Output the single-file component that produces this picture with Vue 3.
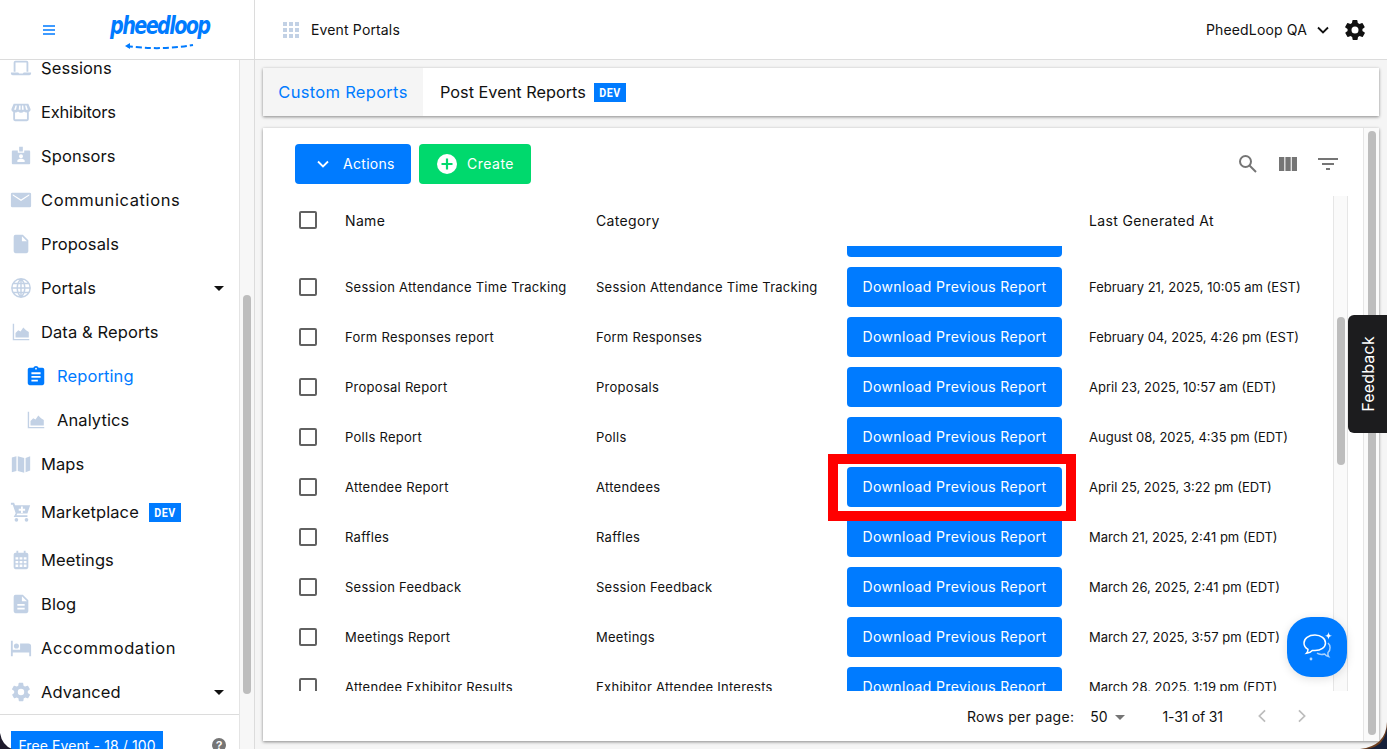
<script setup>
const navTop = [
  { label: 'Sessions', icon: 'laptop' },
  { label: 'Exhibitors', icon: 'store', tight: true },
  { label: 'Sponsors', icon: 'badge' },
  { label: 'Communications', icon: 'mail', wide: true },
  { label: 'Proposals', icon: 'file' },
  { label: 'Portals', icon: 'globe', caret: true },
  { label: 'Data & Reports', icon: 'chart' },
  { label: 'Reporting', icon: 'clip', sub: true, active: true },
  { label: 'Analytics', icon: 'chart', sub: true },
  { label: 'Maps', icon: 'map' },
  { label: 'Marketplace', icon: 'cart', dev: true, tall: true },
  { label: 'Meetings', icon: 'cal' },
  { label: 'Blog', icon: 'doc' },
  { label: 'Accommodation', icon: 'bed', wide: true },
  { label: 'Advanced', icon: 'gear', caret: true }
]
const icons = {
  laptop: 'M4 6a2 2 0 0 1 2-2h12a2 2 0 0 1 2 2v10h-2V6H6v10H4zM1 17h8l1 1h4l1-1h8v1a2 2 0 0 1-2 2H3a2 2 0 0 1-2-2z',
  store: 'M4 3h16l2.500 6a3 3 0 0 1-2 3v8a2 2 0 0 1-2 2H5.500a2 2 0 0 1-2-2v-8a3 3 0 0 1-2-3zM5.500 12.500V20h13v-7.500a4 4 0 0 1-3.250-1 4.500 4.500 0 0 1-6.500 0 4 4 0 0 1-3.250 1zM6 5l-1.500 4.500h2L7.500 5zM10 5l-.5 4.500h2V5zM13 5v4.500h2L14.500 5zM16.500 5l1 4.500h2L18 5z',
  badge: 'M10 2h4v5h-4zM3 6h5.500v2.500h7V6H21a1 1 0 0 1 1 1v13a1 1 0 0 1-1 1H3a1 1 0 0 1-1-1V7a1 1 0 0 1 1-1zm9 4a2.200 2.200 0 1 0 0 4.400 2.200 2.200 0 0 0 0-4.400zm-4 8.500h8V17c0-1.300-2.700-2-4-2s-4 .7-4 2z',
  mail: 'M2.500 4h19A1.500 1.500 0 0 1 23 5.500v13a1.500 1.500 0 0 1-1.500 1.500h-19A1.500 1.500 0 0 1 1 18.500v-13A1.500 1.500 0 0 1 2.500 4zM3 7l9 6 9-6V5.800l-9 5.700-9-5.700z',
  file: 'M6 2h8l6 6v12a2 2 0 0 1-2 2H6a2 2 0 0 1-2-2V4a2 2 0 0 1 2-2zm7 1.500V9h5.500z',
  globe: 'M12 2a10 10 0 1 0 0 20 10 10 0 0 0 0-20zM12 2c-5.500 5.500-5.500 14.500 0 20M12 2c5.500 5.500 5.500 14.500 0 20M12 2v20M2 12h20M3.500 7h17M3.500 17h17',
  chart: 'M3 3h1.500v16.500H21V21H3zM6 18v-5l3-3 2.500 1.500L14.500 7l3 3 3 2v6z',
  map: 'M2 5l5-1.500v16L2 21zM8.500 3.500l7 2v16l-7-2zM17 5.500l5-2V19l-5 2z',
  cart: 'M1 2h3.500l1 2.500H22l-3 9H8l-1 2h12v2H4l2.200-4.200L3 4H1zM12 6v2.500H9.500v2H12V13h2v-2.500h2.500v-2H14V6zM7 18.500a2 2 0 1 0 0 4 2 2 0 0 0 0-4zm11 0a2 2 0 1 0 0 4 2 2 0 0 0 0-4z',
  cal: 'M7 2h2v2h6V2h2v2h1a2 2 0 0 1 2 2v14a2 2 0 0 1-2 2H6a2 2 0 0 1-2-2V6a2 2 0 0 1 2-2h1zM6 9v2.500h3V9zm4.500 0v2.500h3V9zM15 9v2.500h3V9zM6 13v2.500h3V13zm4.500 0v2.500h3V13zM15 13v2.500h3V13zM6 17v2.500h3V17zm4.500 0v2.500h3V17zM15 17v2.500h3V17z',
  doc: 'M6 2h8l6 6v12a2 2 0 0 1-2 2H6a2 2 0 0 1-2-2V4a2 2 0 0 1 2-2zm7 1.500V9h5.500zM8 12v2h8v-2zm0 4v2h8v-2z',
  bed: 'M1 4h2v10h8V7h9a3 3 0 0 1 3 3v11h-2v-4H3v4H1zM7 7a2.800 2.800 0 1 0 0 5.600A2.800 2.800 0 0 0 7 7z',
  clip: 'M19 3h-4.200C14.400 1.800 13.300 1 12 1s-2.400.8-2.800 2H5a2 2 0 0 0-2 2v15a2 2 0 0 0 2 2h14a2 2 0 0 0 2-2V5a2 2 0 0 0-2-2zm-7 0a1 1 0 1 1 0 2 1 1 0 0 1 0-2zm2 15H7v-2h7zm3-4H7v-2h10zm0-4H7V8h10z',
  gear: 'M19.400 13a7.500 7.500 0 0 0 0-2l2.100-1.600a.5.5 0 0 0 .1-.6l-2-3.500a.5.5 0 0 0-.6-.2l-2.500 1a7.300 7.300 0 0 0-1.700-1l-.4-2.700a.5.5 0 0 0-.5-.4h-4a.5.5 0 0 0-.5.4l-.4 2.700a7.300 7.300 0 0 0-1.700 1l-2.500-1a.5.5 0 0 0-.6.2l-2 3.500a.5.5 0 0 0 .1.600L4.600 11a7.500 7.500 0 0 0 0 2l-2.100 1.600a.5.5 0 0 0-.1.600l2 3.500a.5.5 0 0 0 .6.2l2.500-1a7.300 7.300 0 0 0 1.700 1l.4 2.700a.5.5 0 0 0 .5.4h4a.5.5 0 0 0 .5-.4l.4-2.700a7.300 7.300 0 0 0 1.700-1l2.500 1a.5.5 0 0 0 .6-.2l2-3.500a.5.5 0 0 0-.1-.6zM12 15.500a3.500 3.500 0 1 1 0-7 3.500 3.500 0 0 1 0 7z'
}
const rows = [
  { name: '', category: '', date: '', clipped: true },
  { name: 'Session Attendance Time Tracking', category: 'Session Attendance Time Tracking', date: 'February 21, 2025, 10:05 am (EST)' },
  { name: 'Form Responses report', category: 'Form Responses', date: 'February 04, 2025, 4:26 pm (EST)' },
  { name: 'Proposal Report', category: 'Proposals', date: 'April 23, 2025, 10:57 am (EDT)' },
  { name: 'Polls Report', category: 'Polls', date: 'August 08, 2025, 4:35 pm (EDT)' },
  { name: 'Attendee Report', category: 'Attendees', date: 'April 25, 2025, 3:22 pm (EDT)', marked: true },
  { name: 'Raffles', category: 'Raffles', date: 'March 21, 2025, 2:41 pm (EDT)' },
  { name: 'Session Feedback', category: 'Session Feedback', date: 'March 26, 2025, 2:41 pm (EDT)' },
  { name: 'Meetings Report', category: 'Meetings', date: 'March 27, 2025, 3:57 pm (EDT)' },
  { name: 'Attendee Exhibitor Results', category: 'Exhibitor Attendee Interests', date: 'March 28, 2025, 1:19 pm (EDT)' }
]
</script>

<template>
  <div class="app">
    <aside class="side">
      <header class="brand">
        <svg class="burger" viewBox="0 0 12 10" width="12" height="10"><path d="M0 1h12M0 5h12M0 9h12" stroke="#007bff" stroke-width="1.300" fill="none"/></svg>
        <div class="logo">
          <span class="logo-text">pheedloop</span>
          <svg class="logo-arrow" viewBox="0 0 70 8" width="70" height="8"><path d="M2 3c20 3 44 3 66-1" fill="none" stroke="#007bff" stroke-width="2" stroke-dasharray="6 3"/><path d="M0 3l5-3v6z" fill="#007bff"/></svg>
        </div>
      </header>
      <div class="side-body">
        <div class="side-main">
          <nav class="nav">
            <ul class="nav-list">
              <li v-for="item in navTop" :key="item.label" class="nav-item" :class="{ sub: item.sub, active: item.active, tall: item.tall, wide: item.wide, tight: item.tight }">
                <svg class="nav-icon" viewBox="0 0 24 24" width="22" height="22"><path :class="{ outline: item.icon === 'globe' }" :d="icons[item.icon]" fill-rule="evenodd"/></svg>
                <span>{{ item.label }}</span>
                <b v-if="item.dev" class="dev"><span>DEV</span></b>
                <i v-if="item.caret" class="caret"></i>
              </li>
            </ul>
          </nav>
          <footer class="side-foot">
            <span class="plan">Free Event - 18 / 100</span>
            <span class="help">?</span>
          </footer>
        </div>
        <div class="side-track"><div class="side-thumb"></div></div>
      </div>
    </aside>

    <div class="main">
      <header class="top">
        <svg viewBox="0 0 16 16" width="16" height="16" class="grid-icon"><path d="M0 0h4v4H0zM6 0h4v4H6zM12 0h4v4h-4zM0 6h4v4H0zM6 6h4v4H6zM12 6h4v4h-4zM0 12h4v4H0zM6 12h4v4H6zM12 12h4v4h-4z"/></svg>
        <span class="portal">Event Portals</span>
        <span class="org">PheedLoop QA</span>
        <svg viewBox="0 0 12 8" width="12" height="8" class="org-chev"><path d="M1 1.500l5 5 5-5" fill="none" stroke="#111" stroke-width="1.800"/></svg>
        <svg viewBox="0 0 24 24" width="24" height="24" class="top-gear"><path :d="icons.gear" fill-rule="evenodd"/></svg>
      </header>

      <div class="content">
        <div class="tabs">
          <button class="tab tab-on">Custom Reports</button>
          <button class="tab"><span>Post Event Reports</span><b class="dev"><span>DEV</span></b></button>
        </div>

        <section class="card">
          <div class="card-body">
            <div class="toolbar">
              <button class="btn btn-blue">
                <svg viewBox="0 0 12 8" width="12" height="8"><path d="M1 1.500l5 5 5-5" fill="none" stroke="#fff" stroke-width="1.800"/></svg>
                Actions
              </button>
              <button class="btn btn-green">
                <svg viewBox="0 0 20 20" width="20" height="20"><circle cx="10" cy="10" r="10" fill="#fff"/><path d="M10 4.500v11M4.500 10h11" stroke="#00d96d" stroke-width="2.200"/></svg>
                Create
              </button>
              <div class="tools">
                <svg viewBox="0 0 24 24" width="24" height="24"><circle cx="9.500" cy="9.500" r="5.500" fill="none" stroke="#757575" stroke-width="2"/><path d="M13.500 13.500L20 20" stroke="#757575" stroke-width="2"/></svg>
                <svg viewBox="0 0 24 24" width="24" height="24"><path d="M3 5h5.300v14H3zM9.400 5h5.300v14H9.400zM15.800 5H21v14h-5.200z" fill="#757575"/></svg>
                <svg viewBox="0 0 24 24" width="24" height="24"><path d="M2 6h20v2H2zM6 11h12v2H6zM10 16h4v2h-4z" fill="#757575"/></svg>
              </div>
            </div>

            <div class="table">
              <div class="table-inner">
                <div class="thead">
                  <span class="box"></span>
                  <span class="c-name">Name</span>
                  <span class="c-cat">Category</span>
                  <span class="c-btn"></span>
                  <span class="c-date">Last Generated At</span>
                </div>
                <div class="tbody">
                  <div v-for="(row, i) in rows" :key="i" class="row" :class="{ first: row.clipped }">
                    <span class="box"></span>
                    <span class="c-name">{{ row.name }}</span>
                    <span class="c-cat">{{ row.category }}</span>
                    <span class="c-btn"><button class="dl">Download Previous Report</button></span>
                    <span class="c-date">{{ row.date }}</span>
                    <i v-if="row.marked" class="mark"></i>
                  </div>
                </div>
              </div>
              <div class="tbl-track"><div class="tbl-thumb"></div></div>
            </div>

            <div class="pager">
              <span class="rpp">Rows per page:</span>
              <span class="rpp-val">50</span>
              <i class="rpp-caret"></i>
              <span class="range">1-31 of 31</span>
              <svg viewBox="0 0 10 16" width="10" height="14" class="pg"><path d="M8.500 1.500L2 8l6.500 6.500" fill="none" stroke="#bdbdbd" stroke-width="2"/></svg>
              <svg viewBox="0 0 10 16" width="10" height="14" class="pg pg-next"><path d="M1.500 1.500L8 8l-6.500 6.500" fill="none" stroke="#bdbdbd" stroke-width="2"/></svg>
            </div>
          </div>
          <div class="card-track"><div class="card-thumb"></div></div>
        </section>
      </div>
    </div>

    <button class="feedback"><span>Feedback</span></button>
    <button class="chat">
      <svg viewBox="0 0 34 32" width="34" height="32" fill="none" stroke="#fff" stroke-width="1.500">
        <path d="M15 4c-6.500 0-11 3.400-11 8 0 2.800 1.500 5 4 6.300 0 1.500-.5 3-1.500 4 2.500-.2 4.500-1.400 5.800-2.900l2.700.1c6 0 10.500-3.200 10.500-7.500S21 4 15 4z"/>
        <path d="M28 12c2.500 2 3 7 0 9.500-.3 1.500-.1 3 .6 4-1.800-.4-3-1.200-4-2.500-2.500.7-5.500.6-7.600-.8" stroke-opacity=".65"/>
        <path d="M28.500 1c.4 2.600 1.200 3.400 3.500 3.800-2.300.4-3.100 1.200-3.500 3.700-.4-2.500-1.200-3.300-3.500-3.700 2.300-.4 3.100-1.200 3.500-3.800z" fill="#fff" stroke="none"/>
        <circle cx="11" cy="28" r="1.400" fill="#fff" fill-opacity=".7" stroke="none"/>
      </svg>
    </button>
    <svg class="corner corner-l" viewBox="0 0 12 16" width="12" height="16"><path d="M0 0Q2 12 12 16H0z" fill="#1d1a2b"/></svg>
    <svg class="corner corner-r" viewBox="0 0 27 27" width="27" height="27"><path d="M27 0Q26 24 0 27H27z" fill="#6e3f1f"/><path d="M27 5Q25 25 6 27H27z" fill="#15203a"/></svg>
  </div>
</template>

<style>
html, body { margin: 0; height: 100%; overflow: hidden; }
</style>

<style scoped>
.app {
  position: relative;
  display: flex;
  width: 1387px;
  height: 749px;
  overflow: hidden;
  background: #f5f5f5;
  font-family: Inter, "Liberation Sans", sans-serif;
  color: #111;
}
button { font-family: inherit; border: 0; cursor: pointer; }
.side {
  flex: 0 0 255px;
  display: flex;
  flex-direction: column;
  background: #fff;
  border-right: 1px solid #dcdcdc;
  box-sizing: border-box;
}
.brand {
  flex: 0 0 60px;
  display: flex;
  align-items: center;
  box-sizing: border-box;
  padding-left: 43px;
  background: #fff;
  border-bottom: 1px solid #dcdcdc;
}
.burger { flex: none; }
.logo { position: relative; margin-left: 55px; width: 101px; height: 40px; }
.logo-text {
  display: block;
  font: italic 700 24px/32px "DejaVu Sans", sans-serif;
  letter-spacing: -2px;
  color: #007bff;
  transform: scaleX(.8);
  transform-origin: left center;
  white-space: nowrap;
}
.logo-arrow { position: absolute; left: 15px; top: 33px; }
.side-body { flex: 1; min-height: 0; display: flex; }
.side-main { flex: 0 0 240px; display: flex; flex-direction: column; box-sizing: border-box; border-right: 1px solid #e4e4e4; background: #fff; min-width: 0; }
.nav { flex: 1; min-height: 0; overflow: hidden; }
.nav-list { list-style: none; margin: -14px 0 0; padding: 0; }
.nav-item {
  display: flex;
  align-items: center;
  height: 44px;
  padding: 0 15px 0 10px;
  font-size: 16.500px;
  letter-spacing: .1px;
  white-space: nowrap;
}
.nav-item.tall { height: 52px; }
.nav-item.wide { letter-spacing: .6px; }
.nav-item.tight { letter-spacing: -.2px; }
.nav-item.sub { padding-left: 25px; }
.nav-item.active { color: #007bff; }
.nav-icon { flex: none; margin-right: 9px; fill: #c2d1e5; }
.sub .nav-icon { margin-right: 10px; }
.active .nav-icon { fill: #007bff; }
.outline { fill: none; stroke: #c2d1e5; stroke-width: 1.600; }
.caret {
  margin-left: auto;
  border: 5px solid transparent;
  border-top-color: #111;
  border-bottom: 0;
}
.dev {
  display: inline-block;
  margin-left: 8px;
  width: 32px;
  height: 19px;
  background: #007bff;
  color: #fff;
  font: 700 13px/19px Roboto, "Liberation Sans", sans-serif;
  letter-spacing: .6px;
  text-align: center;
}
.nav-item .dev { margin-left: 10px; }
.dev span { display: inline-block; transform: scaleX(.82); }
.side-foot {
  position: relative;
  flex: 0 0 35px;
  box-sizing: border-box;
  overflow: hidden;
  border-top: 1px solid #dcdcdc;
}
.plan {
  position: absolute;
  left: 11px;
  top: 16px;
  width: 152px;
  height: 24px;
  background: #007bff;
  color: #fff;
  text-align: center;
  font-size: 14px;
  line-height: 30px;
  letter-spacing: .1px;
}
.help {
  position: absolute;
  left: 212px;
  top: 23px;
  width: 14px;
  height: 14px;
  border-radius: 50%;
  background: #757575;
  color: #fff;
  font: 700 11px/14px "Liberation Sans", sans-serif;
  text-align: center;
}
.side-track { flex: 1; background: #f7f7f7; padding-top: 235px; box-sizing: border-box; }
.side-thumb { width: 8px; height: 399px; margin-left: 3px; border-radius: 4px; background: #bdbdbd; }
.main { flex: 1; min-width: 0; display: flex; flex-direction: column; }
.top {
  flex: 0 0 60px;
  box-sizing: border-box;
  display: flex;
  align-items: center;
  padding: 0 20px 0 28px;
  background: #fff;
  border-bottom: 1px solid #dcdcdc;
}
.grid-icon { fill: #c2d1e5; }
.portal { margin-left: 12px; font-size: 14px; flex: 1; letter-spacing: .15px; }
.org { font-size: 14px; letter-spacing: .15px; }
.org-chev { margin-left: 10px; }
.top-gear { margin-left: 14px; fill: #111; }
.content { padding: 8px 8px 0 8px; flex: 1; min-height: 0; }
.tabs {
  display: flex;
  height: 48px;
  background: #fff;
  box-shadow: 0 1px 3px rgba(0,0,0,.45);
}
.tab {
  height: 48px;
  padding: 0 0 0 17px;
  background: #fff;
  font-size: 16.300px;
  color: #111;
  display: flex;
  align-items: center;
  white-space: pre;
}
.tab-on { background: #f5f5f5; color: #007bff; width: 160px; justify-content: center; padding: 0; letter-spacing: .3px; font-size: 16.500px; }
.card {
  display: flex;
  margin-top: 12px;
  height: 613px;
  background: #fff;
  box-shadow: 0 1px 3px rgba(0,0,0,.45);
}
.card-body { flex: 1; min-width: 0; display: flex; flex-direction: column; padding-right: 15px; }
.toolbar {
  flex: 0 0 68px;
  display: flex;
  align-items: flex-start;
  gap: 8px;
  padding: 16px 8px 0 32px;
  box-sizing: border-box;
}
.btn {
  height: 40px;
  display: flex;
  align-items: center;
  border-radius: 4px;
  color: #fff;
  font-size: 14px;
  padding-bottom: 2px;
}
.btn-blue { width: 116px; background: #007bff; padding-left: 22px; gap: 14px; letter-spacing: .3px; }
.btn-green { width: 112px; background: #00d96d; padding-left: 18px; gap: 10px; letter-spacing: .5px; }
.tools { margin-left: auto; display: flex; gap: 16px; padding-top: 8px; }
.table { flex: 0 0 495px; display: flex; overflow: hidden; }
.table-inner { flex: 1; min-width: 0; display: flex; flex-direction: column; }
.thead, .row {
  display: grid;
  grid-template-columns: 82px 251px 251px 242px 1fr;
  align-items: center;
  font-size: 13px;
  white-space: nowrap;
}
.thead { flex: 0 0 50px; box-sizing: border-box; padding-bottom: 2px; font-size: 14px; letter-spacing: .35px; position: relative; z-index: 1; background: #fff; }
.row .c-name, .row .c-cat { letter-spacing: .27px; }
.tbody { flex: 1; min-height: 0; overflow: hidden; }
.row { position: relative; height: 50px; }
.row.first { margin-top: -34px; }
.box {
  box-sizing: border-box;
  width: 18px;
  height: 18px;
  margin-left: 36px;
  border: 2px solid #616161;
  border-radius: 2px;
}
.dl {
  width: 215px;
  height: 40px;
  background: #007bff;
  color: #fff;
  border-radius: 4px;
  font-size: 14px;
  letter-spacing: .35px;
  padding: 0 0 1px;
}
.mark {
  position: absolute;
  left: 565px;
  top: -8px;
  width: 248px;
  height: 67px;
  box-sizing: border-box;
  border: 10px solid #f00;
  z-index: 3;
  pointer-events: none;
}
.tbl-track {
  flex: 0 0 15px;
  background: #fafafa;
  border-left: 1px solid #e6e6e6;
  border-right: 1px solid #e6e6e6;
  padding-top: 121px;
  box-sizing: border-box;
}
.tbl-thumb { width: 8px; height: 148px; margin-left: 3px; border-radius: 4px; background: #bdbdbd; }
.pager {
  flex: 1;
  display: flex;
  align-items: center;
  font-size: 14px;
  padding-left: 704px;
}
.rpp { letter-spacing: .3px; }
.rpp-val { margin-left: 16px; }
.rpp-caret { margin-left: 7px; border: 5px solid transparent; border-top-color: #757575; border-bottom: 0; margin-top: 2px; }
.range { margin-left: 38px; letter-spacing: -.2px; }
.pg { margin-left: 34px; }
.pg-next { margin-left: 30px; }
.card-track { flex: 0 0 16px; border-left: 1px solid #e6e6e6; background: #fafafa; padding-top: 3px; box-sizing: border-box; }
.card-thumb { width: 8px; height: 604px; margin-left: 4px; border-radius: 4px; background: #bdbdbd; }
.feedback {
  position: absolute;
  right: 0;
  top: 315px;
  width: 39px;
  height: 118px;
  padding: 0;
  background: #1c1c1e;
  border-radius: 6px 0 0 6px;
  color: #fff;
  font-size: 16px;
  letter-spacing: .2px;
  display: flex;
  align-items: center;
  justify-content: center;
}
.feedback span { transform: rotate(-90deg); white-space: nowrap; }
.chat {
  position: absolute;
  left: 1287px;
  top: 617px;
  width: 60px;
  height: 60px;
  padding: 0;
  border-radius: 24px;
  background: #007bff;
  box-shadow: 0 2px 10px rgba(0,0,0,.12);
  display: flex;
  align-items: center;
  justify-content: center;
}
.corner { position: absolute; bottom: 0; }
.corner-l { left: 0; }
.corner-r { right: 0; }
</style>
